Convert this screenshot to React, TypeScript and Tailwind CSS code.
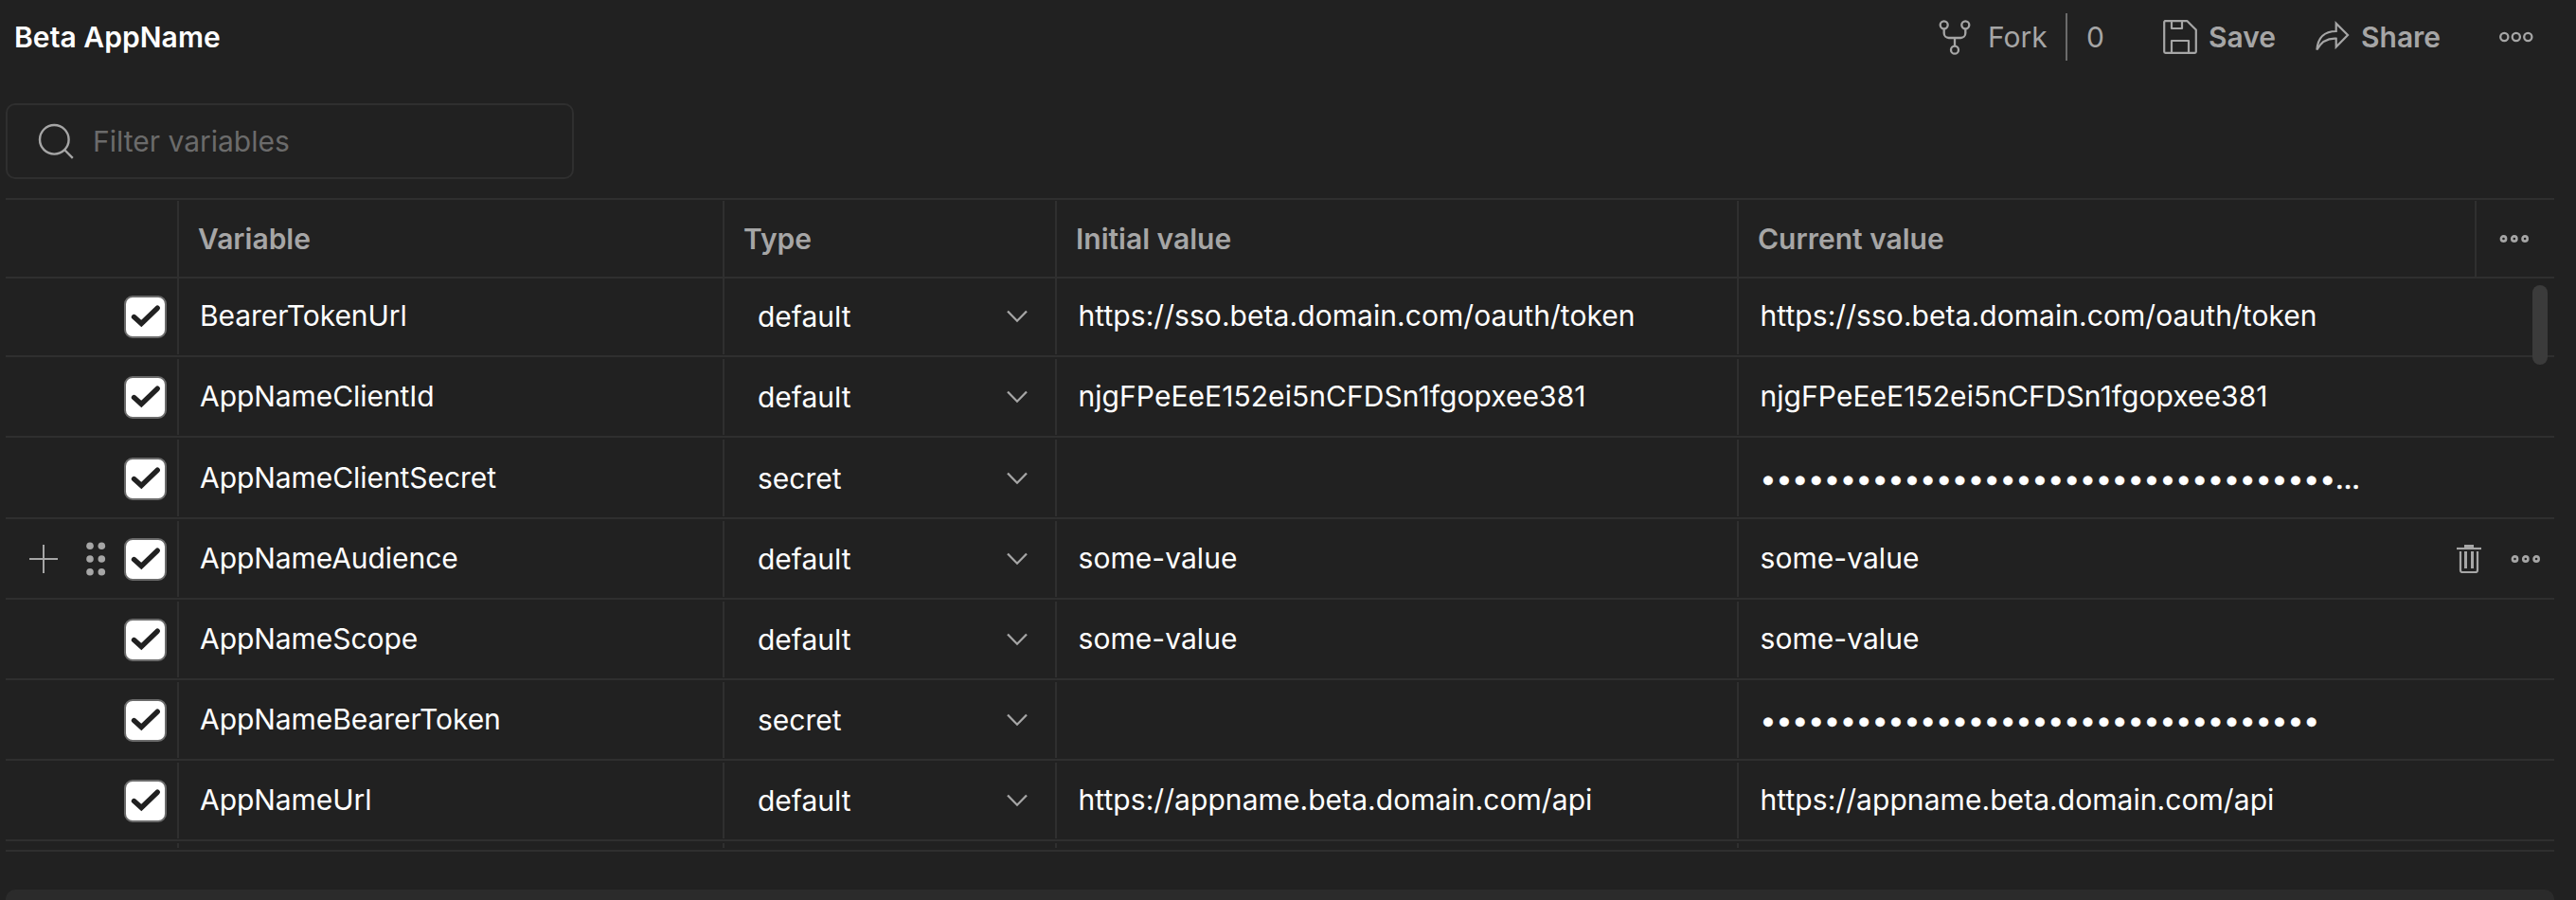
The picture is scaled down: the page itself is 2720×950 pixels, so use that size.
import type { ReactNode } from "react";

type Variable = {
  name: string;
  type: "default" | "secret";
  initial: string;
  current: string;
  cell: string;
  active?: boolean;
};

const BULLETS_35 = "•".repeat(35);

const VARIABLES: Variable[] = [
  { name: "BearerTokenUrl", type: "default", initial: "https://sso.beta.domain.com/oauth/token", current: "https://sso.beta.domain.com/oauth/token", cell: "h-20" },
  { name: "AppNameClientId", type: "default", initial: "njgFPeEeE152ei5nCFDSn1fgopxee381", current: "njgFPeEeE152ei5nCFDSn1fgopxee381", cell: "mt-0.5 h-20" },
  { name: "AppNameClientSecret", type: "secret", initial: "", current: BULLETS_35 + "•...", cell: "mt-0.5 h-[81px] pt-px" },
  { name: "AppNameAudience", type: "default", initial: "some-value", current: "some-value", cell: "mt-0.5 h-20", active: true },
  { name: "AppNameScope", type: "default", initial: "some-value", current: "some-value", cell: "mt-0.5 h-20" },
  { name: "AppNameBearerToken", type: "secret", initial: "", current: BULLETS_35, cell: "mt-0.5 h-20" },
  { name: "AppNameUrl", type: "default", initial: "https://appname.beta.domain.com/api", current: "https://appname.beta.domain.com/api", cell: "mt-0.5 h-20" },
];

function ForkIcon() {
  return (
    <svg width="34" height="38" viewBox="0 0 34 38" fill="none" stroke="currentColor" strokeWidth="2.300">
      <circle cx="5.700" cy="6.300" r="4" />
      <circle cx="28.300" cy="6.300" r="4" />
      <circle cx="17" cy="32.700" r="4" />
      <path d="M5.700 10.300V15a5 5 0 0 0 5 5h12.600a5 5 0 0 0 5-5v-4.700M17 20v8.700" />
    </svg>
  );
}

function SaveIcon() {
  return (
    <svg width="36" height="36" viewBox="0 0 36 36" fill="none" stroke="currentColor" strokeWidth="2.200" strokeLinejoin="round">
      <path d="M2 1.200H25.500L34.800 10.500V33.500a1.300 1.300 0 0 1-1.300 1.300H2.500a1.300 1.300 0 0 1-1.300-1.300V2.500a1.300 1.300 0 0 1 1.300-1.300Z" />
      <path d="M9 1v8h11V1M9 34.500V22h18v12.500" />
    </svg>
  );
}

function ShareIcon() {
  return (
    <svg width="36" height="34" viewBox="0 0 36 34" fill="none" stroke="currentColor" strokeWidth="2.200">
      <path d="M21.700 2.700V11C9 11 2.500 17 1.400 30.500C6 22 12.500 18.200 21.700 18.700V27.500L34 15Z" />
    </svg>
  );
}

function LargeDotsIcon() {
  return (
    <svg width="36" height="12" viewBox="0 0 36 12" fill="none" stroke="currentColor" strokeWidth="2.300">
      <circle cx="5.300" cy="6" r="4.100" />
      <circle cx="17.800" cy="6" r="4.100" />
      <circle cx="30.300" cy="6" r="4.100" />
    </svg>
  );
}

function SmallDotsIcon() {
  return (
    <svg width="32" height="8" viewBox="0 0 32 8" fill="none" stroke="currentColor" strokeWidth="2.600">
      <circle cx="4.500" cy="4" r="2.600" />
      <circle cx="15.800" cy="4" r="2.600" />
      <circle cx="27.100" cy="4" r="2.600" />
    </svg>
  );
}

function SearchIcon() {
  return (
    <svg width="38" height="38" viewBox="0 0 38 38" fill="none" stroke="currentColor" strokeWidth="2.400">
      <circle cx="17.300" cy="17.300" r="15.300" />
      <path d="M28 28L36.800 36.800" />
    </svg>
  );
}

function PlusIcon() {
  return (
    <svg width="30" height="30" viewBox="0 0 30 30" stroke="currentColor" strokeWidth="2">
      <path d="M15 0V30M0 15H30" />
    </svg>
  );
}

function DragIcon() {
  return (
    <svg width="21" height="36" viewBox="0 0 21 36" fill="currentColor">
      {[4.3, 18, 31.7].map((cy) => (
        <g key={cy}>
          <circle cx="4" cy={cy} r="3.800" />
          <circle cx="16.300" cy={cy} r="3.800" />
        </g>
      ))}
    </svg>
  );
}

function TrashIcon() {
  return (
    <svg width="26" height="30" viewBox="0 0 26 30" fill="none" stroke="currentColor" strokeWidth="2.200">
      <path d="M8 0h10v3H8Z" fill="currentColor" stroke="none" />
      <path d="M0 4H26" />
      <path d="M4 7V27a2 2 0 0 0 2 2H20a2 2 0 0 0 2-2V7" />
      <path d="M9.500 7V25M16.500 7V25" strokeWidth="3" />
    </svg>
  );
}

function ChevronIcon() {
  return (
    <svg width="22" height="14" viewBox="0 0 22 14" fill="none" stroke="currentColor" strokeWidth="2.300">
      <path d="M1 1.500L11 11.700L21 1.500" />
    </svg>
  );
}

function Checkbox() {
  return (
    <span className="flex size-[45px] shrink-0 rounded-[9px] border-2 border-[#6b6b6b] bg-white text-[#212121]">
      <svg width="41" height="41" viewBox="2 2 41 41" fill="none" stroke="currentColor" strokeWidth="5.400" strokeLinecap="round">
        <path d="M10.500 22.500L18.300 29.500L35.200 13.200" />
      </svg>
    </span>
  );
}

function HeaderCell({ className, children }: { className: string; children?: ReactNode }) {
  return (
    <div className={`mt-px flex h-20 items-center border-r-2 border-[#2f2f2f] pl-5 font-semibold ${className}`}>{children}</div>
  );
}

function VariableRow({ variable }: { variable: Variable }) {
  const cell = `flex items-center ${variable.cell}`;
  const secret = variable.type === "secret";
  return (
    <div className="flex border-b-2 border-[#2f2f2f] pb-px text-white">
      <div className={`${cell} w-[183px] justify-end border-r-2 border-[#2f2f2f] pr-[11px] text-[#a6a6a6]`}>
        {variable.active && (
          <span className="mr-[19px] flex items-center gap-[30px]">
            <PlusIcon />
            <DragIcon />
          </span>
        )}
        <Checkbox />
      </div>
      <div className={`${cell} w-[576px] border-r-2 border-[#2f2f2f] pb-0.5 pl-[22px] tracking-[-0.06px]`}>{variable.name}</div>
      <div className={`${cell} w-[351px] justify-between border-r-2 border-[#2f2f2f] pr-[29px] pl-[35px]`}>
        <span>{variable.type}</span>
        <span className="text-[#a6a6a6]">
          <ChevronIcon />
        </span>
      </div>
      <div className={`${cell} w-[720px] border-r-2 border-[#2f2f2f] pb-0.5 pl-[22.5px] tracking-[0.06px]`}>{variable.initial}</div>
      <div className={`${cell} w-[861px] justify-between pr-[14px] pl-[22.5px] ${secret ? "" : "pb-0.5"}`}>
        <span className={secret ? "[-webkit-text-stroke:0.5px_white]" : "tracking-[0.06px]"}>{variable.current}</span>
        {variable.active && (
          <span className="mt-0.5 flex items-center gap-[31px] text-[#a6a6a6]">
            <TrashIcon />
            <SmallDotsIcon />
          </span>
        )}
      </div>
    </div>
  );
}

export default function App() {
  return (
    <div className="flex h-[950px] w-[2720px] flex-col overflow-hidden bg-[#212121] pr-[23px] pl-1.5 font-['Inter',sans-serif] text-[30px] leading-9 whitespace-nowrap text-[#a6a6a6]">
      <header className="flex h-[78px] shrink-0 items-center justify-between pr-[22px] pl-[9px]">
        <h1 className="font-semibold tracking-[0.06px] text-white">Beta AppName</h1>
        <div className="flex items-center">
          <ForkIcon />
          <span className="ml-[18px] w-[82px]">Fork</span>
          <span className="h-[50px] w-0.5 bg-[#6b6b6b]" />
          <span className="ml-5 w-[81px]">0</span>
          <SaveIcon />
          <span className="ml-3 w-[113px] font-semibold">Save</span>
          <ShareIcon />
          <span className="ml-3 w-[146px] font-semibold">Share</span>
          <LargeDotsIcon />
        </div>
      </header>

      <div className="mt-[31px] flex h-20 w-[600px] shrink-0 items-center rounded-[10px] border-2 border-[#2f2f2f] pl-8">
        <SearchIcon />
        <span className="ml-5 text-[#6b6b6b]">Filter variables</span>
      </div>

      <div className="relative mt-5 flex flex-col border-t-2 border-[#2f2f2f]">
        <div className="flex border-b-2 border-[#2f2f2f]">
          <HeaderCell className="w-[183px]" />
          <HeaderCell className="w-[576px]">Variable</HeaderCell>
          <HeaderCell className="w-[351px]">Type</HeaderCell>
          <HeaderCell className="w-[720px]">Initial value</HeaderCell>
          <HeaderCell className="w-[779px]">Current value</HeaderCell>
          <div className="flex h-[81px] items-center pl-6">
            <SmallDotsIcon />
          </div>
        </div>
        {VARIABLES.map((variable) => (
          <VariableRow key={variable.name} variable={variable} />
        ))}
        <div className="flex h-[11px] border-b-2 border-[#2f2f2f] pt-0.5 pb-0.5">
          <div className="w-[183px] border-r-2 border-[#2f2f2f]" />
          <div className="w-[576px] border-r-2 border-[#2f2f2f]" />
          <div className="w-[351px] border-r-2 border-[#2f2f2f]" />
          <div className="w-[720px] border-r-2 border-[#2f2f2f]" />
        </div>
        <div className="absolute top-[90px] right-[7px] h-[84px] w-4 rounded-full bg-[#3b3b3b]" />
      </div>

      <div className="mt-10 h-[11px] shrink-0 rounded-t-[10px] bg-[#2b2b2b]" />
    </div>
  );
}
